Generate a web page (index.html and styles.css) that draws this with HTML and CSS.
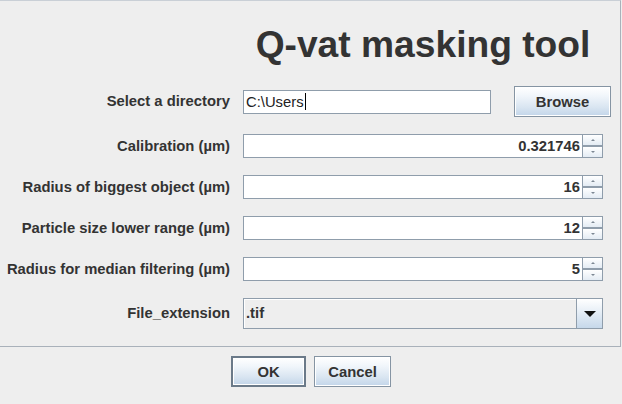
FILE: index.html
```html
<!DOCTYPE html>
<html>
<head>
<meta charset="utf-8">
<link rel="stylesheet" href="styles.css">
</head>
<body>
<div class="panel">
  <div class="form">
    <div class="title">Q-vat masking tool</div>

    <div class="lbl">Select a directory</div>
    <div class="dir-row">
      <div class="textfield">C:\Users<span class="caret"></span></div>
      <button class="btn browse">Browse</button>
    </div>

    <div class="lbl">Calibration (µm)</div>
    <div class="spinner">
      <div class="spin-field">0.321746</div>
      <div class="spin-btns"><span class="sb up"></span><span class="sb down"></span></div>
    </div>

    <div class="lbl">Radius of biggest object (µm)</div>
    <div class="spinner">
      <div class="spin-field">16</div>
      <div class="spin-btns"><span class="sb up"></span><span class="sb down"></span></div>
    </div>

    <div class="lbl">Particle size lower range (µm)</div>
    <div class="spinner">
      <div class="spin-field">12</div>
      <div class="spin-btns"><span class="sb up"></span><span class="sb down"></span></div>
    </div>

    <div class="lbl">Radius for median filtering (µm)</div>
    <div class="spinner">
      <div class="spin-field">5</div>
      <div class="spin-btns"><span class="sb up"></span><span class="sb down"></span></div>
    </div>

    <div class="lbl">File_extension</div>
    <div class="combo">
      <div class="combo-text">.tif</div>
      <div class="combo-arrow"><span class="tri"></span></div>
    </div>
  </div>
</div>
<div class="footer">
  <button class="btn ok">OK</button>
  <button class="btn cancel">Cancel</button>
</div>
</body>
</html>
```

FILE: styles.css
```css
* { box-sizing: border-box; }
html, body {
  margin: 0;
  padding: 0;
  background: #eeeeee;
  width: 622px;
  height: 404px;
  overflow: hidden;
  font-family: "Liberation Sans", Arial, sans-serif;
  color: #333333;
}
.panel {
  width: 621px;
  border-top: 1px solid #c9cfd6;
  border-right: 1px solid #a9b1ba;
  border-bottom: 1px solid #a9b1ba;
  padding: 18px 8px 17px 0;
}
.form {
  display: grid;
  grid-template-columns: 230px 369px;
  column-gap: 13px;
  row-gap: 17px;
  align-items: center;
}
.title {
  grid-column: 2;
  width: 360px;
  text-align: center;
  font-size: 37.2px;
  font-weight: bold;
  line-height: 50px;
  color: #333333;
}
.lbl {
  grid-column: 1;
  justify-self: end;
  font-size: 14.8px;
  font-weight: bold;
  white-space: nowrap;
  line-height: 17px;
}
.dir-row {
  display: flex;
  align-items: center;
  height: 31px;
}
.textfield {
  width: 248px;
  height: 24px;
  background: #ffffff;
  border: 1px solid #8f9dab;
  font-size: 14.8px;
  line-height: 22px;
  padding-left: 2px;
  color: #222;
  display: flex;
  align-items: center;
}
.caret {
  display: inline-block;
  width: 1px;
  height: 17px;
  background: #000;
  margin-left: 1px;
}
.btn {
  font-family: "Liberation Sans", Arial, sans-serif;
  font-size: 14.8px;
  font-weight: bold;
  color: #333333;
  height: 31px;
  border: 1px solid #8594a3;
  box-shadow: inset 0 0 0 1px #ffffff;
  background: linear-gradient(#ffffff 0%, #f1f6fb 30%, #d9e5f1 70%, #c2d5e9 100%);
  padding: 0;
  margin: 0;
}
.browse {
  width: 97px;
  margin-left: 23px;
}
.spinner {
  display: flex;
  width: 360px;
  height: 24px;
}
.spin-field {
  flex: 1;
  background: #ffffff;
  border: 1px solid #8f9dab;
  text-align: right;
  font-size: 14.8px;
  font-weight: bold;
  line-height: 22px;
  padding-right: 2px;
  color: #333;
}
.spin-btns {
  width: 20px;
  display: flex;
  flex-direction: column;
}
.sb {
  height: 12px;
  border: 1px solid #8f9dab;
  border-left: none;
  background: linear-gradient(#ffffff, #e4ecf4);
  display: flex;
  align-items: center;
  justify-content: center;
}
.sb.down { border-top: 1px solid #8f9dab; }
.sb.up::after {
  content: "";
  border-left: 2px solid transparent;
  border-right: 2px solid transparent;
  border-bottom: 2px solid #7d8894;
}
.sb.down::after {
  content: "";
  border-left: 2px solid transparent;
  border-right: 2px solid transparent;
  border-top: 2px solid #7d8894;
}
.combo {
  display: flex;
  width: 360px;
  height: 31px;
  border: 1px solid #8f9dab;
}
.combo-text {
  flex: 1;
  background: #eeeeee;
  border-right: 1px solid #8f9dab;
  box-shadow: inset 1px 1px 0 #ffffff;
  font-size: 14.8px;
  font-weight: bold;
  padding-left: 2px;
  line-height: 28px;
  color: #333;
}
.combo-arrow {
  width: 25px;
  background: linear-gradient(#ffffff 0%, #e9f0f7 40%, #c6d8ea 100%);
  display: flex;
  align-items: center;
  justify-content: center;
}
.tri {
  width: 0;
  height: 0;
  border-left: 6px solid transparent;
  border-right: 6px solid transparent;
  border-top: 6px solid #111;
}
.footer {
  display: flex;
  justify-content: center;
  gap: 8px;
  margin-top: 9px;
}
.ok {
  width: 75px;
  border: 2px solid #6b7a89;
}
.cancel {
  width: 77px;
}
```
